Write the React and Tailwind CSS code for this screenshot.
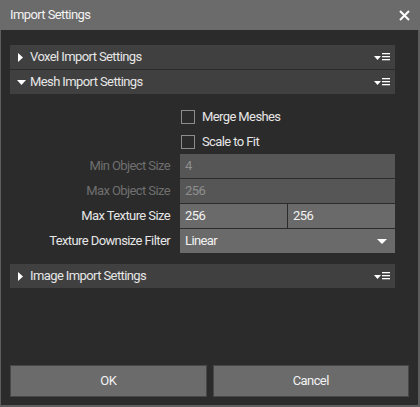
import React from 'react';

const FONT = { fontFamily: 'Roboto, "Liberation Sans", sans-serif' };

function MenuIcon() {
  return (
    <svg width="16" height="9" viewBox="0 0 16 9" className="shrink-0">
      <path d="M0 3 H7 L3.5 7 Z" fill="#fff" />
      <rect x="8" y="0" width="8" height="1.3" fill="#fff" />
      <rect x="8" y="3" width="8" height="1.3" fill="#fff" />
      <rect x="8" y="6" width="8" height="1.3" fill="#fff" />
    </svg>
  );
}

function SectionHeader({ title, open }) {
  return (
    <div className="h-[24px] bg-[#404040] flex items-center pl-[7px] pr-[5px]">
      <span className="w-[13px] flex items-center">
        {open ? (
          <svg width="9" height="5" viewBox="0 0 9 5"><path d="M0 0 H9 L4.5 5 Z" fill="#fff" /></svg>
        ) : (
          <svg width="5" height="9" viewBox="0 0 5 9" className="ml-[1px]"><path d="M0 0 L5 4.5 L0 9 Z" fill="#fff" /></svg>
        )}
      </span>
      <span className="flex-1 text-[13px] text-[#e6e6e6] tracking-[-0.6px]">{title}</span>
      <MenuIcon />
    </div>
  );
}

function CheckRow({ label }) {
  return (
    <div className="h-[25px] flex items-center pl-[171px]">
      <span className="w-[14px] h-[14px] border border-[#8c8c8c]" />
      <span className="ml-[7px] text-[13px] text-[#e6e6e6] tracking-[-0.6px]">{label}</span>
    </div>
  );
}

function FieldRow({ label, disabled, children }) {
  return (
    <div className="flex h-[25px] pb-[1px]">
      <div className={`w-[160px] flex items-center justify-end text-[13px] tracking-[-0.6px] ${disabled ? 'text-[#6f6f6f]' : 'text-[#e6e6e6]'}`}>
        {label}
      </div>
      <div className="ml-[10px] flex-1 flex gap-[1px]">{children}</div>
    </div>
  );
}

function Input({ value, disabled }) {
  return (
    <div className={`flex-1 flex items-center px-[5px] text-[13px] tracking-[-0.6px] ${disabled ? 'bg-[#565656] text-[#8e8e8e]' : 'bg-[#6a6a6a] text-[#f2f2f2]'}`}>
      {value}
    </div>
  );
}

export default function App() {
  return (
    <div className="w-[420px] h-[407px] flex flex-col select-none" style={FONT}>
      {/* title bar */}
      <div className="h-[30px] bg-[#6b6b6b] flex items-center justify-between pl-[10px] pr-[10px]">
        <span className="text-[13px] text-[#f2f2f2] tracking-[-0.6px]">Import Settings</span>
        <svg width="11" height="11" viewBox="0 0 11 11">
          <path d="M1 1 L10 10 M10 1 L1 10" stroke="#fff" strokeWidth="2" />
        </svg>
      </div>

      <div className="flex-1 flex flex-col bg-[#2b2b2b] border-l border-r-2 border-b-2 border-[#5e5e5e]">
        <div className="pt-[15px] pl-[9px] pr-[23px] flex flex-col">
          <SectionHeader title="Voxel Import Settings" />
          <div className="h-[1px]" />
          <SectionHeader title="Mesh Import Settings" open />

          <div className="pt-[10px] flex flex-col">
            <CheckRow label="Merge Meshes" />
            <CheckRow label="Scale to Fit" />
            <FieldRow label="Min Object Size" disabled>
              <Input value="4" disabled />
            </FieldRow>
            <FieldRow label="Max Object Size" disabled>
              <Input value="256" disabled />
            </FieldRow>
            <FieldRow label="Max Texture Size">
              <Input value="256" />
              <Input value="256" />
            </FieldRow>
            <FieldRow label="Texture Downsize Filter">
              <div className="flex-1 flex items-center justify-between pl-[5px] pr-[8px] bg-[#6a6a6a] text-[13px] text-[#f2f2f2] tracking-[-0.6px]">
                <span>Linear</span>
                <svg width="10" height="5" viewBox="0 0 10 5"><path d="M0 0 H10 L5 5 Z" fill="#fff" /></svg>
              </div>
            </FieldRow>
          </div>

          <div className="mt-[10px]">
            <SectionHeader title="Image Import Settings" />
          </div>
        </div>

        <div className="mt-auto flex gap-[6px] pl-[9px] pr-[9px] pb-[8px]">
          <button className="flex-1 h-[32px] bg-[#6b6b6b] border border-[#474747] text-[13px] text-[#f2f2f2] tracking-[-0.6px]">OK</button>
          <button className="flex-1 h-[32px] bg-[#6b6b6b] border border-[#474747] text-[13px] text-[#f2f2f2] tracking-[-0.6px]">Cancel</button>
        </div>
      </div>
    </div>
  );
}
